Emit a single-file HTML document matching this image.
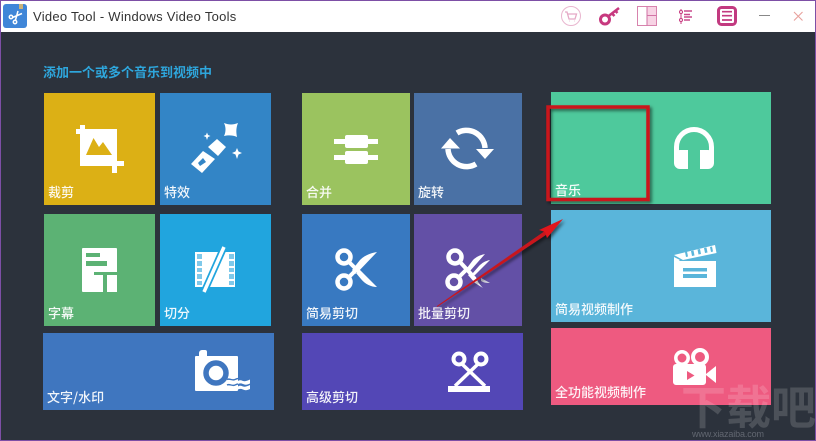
<!DOCTYPE html>
<html><head><meta charset="utf-8">
<style>
html,body{margin:0;padding:0;background:#2c323c}
#w{position:relative;width:816px;height:441px;overflow:hidden;background:#2c323c;font-family:"Liberation Sans","Noto Sans CJK SC",sans-serif}
.t{position:absolute}
.l{position:absolute;color:#fff;font:500 13px/18px "Noto Sans CJK SC",sans-serif;white-space:nowrap;opacity:.93}
svg{position:absolute;left:0;top:0}
</style></head><body><div id="w">
<div class="t" style="left:0;top:0;width:816px;height:32px;background:#fff"></div>
<div class="t" style="left:33px;top:7px;font:13px/19px 'Liberation Sans',sans-serif;color:#333;letter-spacing:.27px;white-space:nowrap">Video Tool - Windows Video Tools</div>
<div class="t" style="left:43px;top:63px;font:700 13px/18px 'Noto Sans CJK SC',sans-serif;color:#2ea6dc;white-space:nowrap">添加一个或多个音乐到视频中</div>

<div class="t" style="left:44px;top:93px;width:111px;height:112px;background:#dcb015"></div>
<div class="t" style="left:160px;top:93px;width:111px;height:112px;background:#3385c6"></div>
<div class="t" style="left:44px;top:214px;width:111px;height:112px;background:#5cb274"></div>
<div class="t" style="left:160px;top:214px;width:111px;height:112px;background:#21a5de"></div>
<div class="t" style="left:43px;top:333px;width:231px;height:77px;background:#3f76bf"></div>
<div class="t" style="left:302px;top:93px;width:108px;height:112px;background:#9bc35f"></div>
<div class="t" style="left:414px;top:93px;width:108px;height:112px;background:#4a71a5"></div>
<div class="t" style="left:302px;top:214px;width:108px;height:112px;background:#3879c1"></div>
<div class="t" style="left:414px;top:214px;width:108px;height:112px;background:#6350a6"></div>
<div class="t" style="left:302px;top:333px;width:221px;height:77px;background:#5347b6"></div>
<div class="t" style="left:551px;top:92px;width:220px;height:112px;background:#4ec99c"></div>
<div class="t" style="left:551px;top:210px;width:220px;height:112px;background:#5ab5da"></div>
<div class="t" style="left:551px;top:328px;width:220px;height:77px;background:#ee5a80"></div>

<div class="l" style="left:48px;top:183px">裁剪</div>
<div class="l" style="left:164px;top:183px">特效</div>
<div class="l" style="left:48px;top:304px">字幕</div>
<div class="l" style="left:164px;top:304px">切分</div>
<div class="l" style="left:47px;top:388px">文字/水印</div>
<div class="l" style="left:306px;top:183px">合并</div>
<div class="l" style="left:418px;top:183px">旋转</div>
<div class="l" style="left:306px;top:304px">简易剪切</div>
<div class="l" style="left:418px;top:304px">批量剪切</div>
<div class="l" style="left:306px;top:388px">高级剪切</div>
<div class="l" style="left:555px;top:181px">音乐</div>
<div class="l" style="left:555px;top:300px">简易视频制作</div>
<div class="l" style="left:555px;top:383px">全功能视频制作</div>

<svg width="816" height="441" viewBox="0 0 816 441">
<defs><filter id="s" x="-20%" y="-20%" width="140%" height="140%"><feDropShadow dx="2" dy="2" stdDeviation="1.6" flood-color="#000" flood-opacity=".55"/></filter></defs>

<!-- app icon -->
<rect x="3" y="4" width="24" height="24" rx="3" fill="#3f86d8"/>
<rect x="19" y="4" width="4" height="5" fill="#c9b27a"/>
<g stroke="#fff" stroke-width="1.500" fill="none"><circle cx="11" cy="17" r="1.700"/><circle cx="15" cy="22" r="1.700"/><path d="M12.500 17.500L22 13.500M15.500 20L18 11"/></g>

<!-- toolbar icons -->
<circle cx="571" cy="16" r="9.500" fill="none" stroke="#e9b6cf"/>
<path d="M565 12h2l2 7h6l1.500-5h-9M569 21h.5M574 21h.5" fill="none" stroke="#e5a9c6" stroke-width="1.300"/>
<circle cx="605" cy="19.500" r="4.500" fill="none" stroke="#c7397f" stroke-width="3"/>
<path d="M608 16.500L619 8M612 13.500l2.500 2.500M615.500 11l2 2" fill="none" stroke="#c7397f" stroke-width="2.600"/>
<rect x="637.500" y="6.500" width="19" height="19" fill="#fff" stroke="#d783ad"/>
<rect x="647" y="7" width="9" height="18" fill="#f7d3e4"/>
<path d="M647 6.500V25.500M647 15.500H656.500" stroke="#d272a5" fill="none"/>
<path d="M681 9V24" stroke="#c7397f" stroke-width="1"/>
<circle cx="681" cy="12" r="1.500" fill="#fff" stroke="#c7397f"/><circle cx="681" cy="20" r="1.500" fill="#fff" stroke="#c7397f"/>
<path d="M684 11h8M684 14.500h6M684 17h8M684 20h6" stroke="#c9488c" stroke-width="1.500"/>
<rect x="718.500" y="7.500" width="17" height="17" rx="3" fill="#fff" stroke="#c23a80" stroke-width="3"/>
<path d="M722 11.700h10M722 15.700h10M722 20h10" stroke="#c23a80" stroke-width="1.700"/>
<path d="M759 15.500h11" stroke="#888" stroke-width="1"/>
<path d="M794 12l8.500 8.500M802.500 12L794 20.500" stroke="#e8a09c" stroke-width="1.100"/>

<!-- crop -->
<g fill="#fff"><rect x="80" y="129" width="37" height="37"/><rect x="76" y="129" width="9" height="5"/><rect x="80" y="125" width="5" height="9"/><rect x="112" y="161" width="12" height="5"/><rect x="112" y="161" width="5" height="12"/></g>
<path d="M86 155L93.500 138 99 147 103 142 112 155z" fill="#dcb015"/>

<!-- wand -->
<g fill="#fff">
<path d="M208 147l9-8 9 8-8 9z"/>
<path d="M191 164l12-13 12 8-13 14z"/>
<path d="M224 123c5 2 9 2 14 0-2 5-2 9-1 14-4-2-9-2-13-1 2-4 2-9 0-13z"/>
<path d="M207 132.500l1 2.500 2.500 1-2.500 1-1 3-1-3-2.500-1 2.500-1z"/>
<path d="M237 148l1.500 3.500 3.500 1.500-3.500 1.500-1.500 4.500-1.500-4.500-3.500-1.500 3.500-1.500z"/>
</g>
<path d="M198 163l5-5 3 4-6 4z" fill="#3385c6"/>

<!-- subtitles -->
<path d="M82 249a1 1 0 0 1 1-1h33a1 1 0 0 1 1 1v43H83a1 1 0 0 1-1-1z" fill="#fff"/>
<path d="M86 253h14v4H86zM86 261h21v5H86zM94 272h23v3h-10v17h-4v-17h-9z" fill="#5cb274"/>

<!-- film -->
<rect x="195" y="252" width="40" height="35" fill="#fff"/>
<g fill="#7fc9ea"><rect x="197" y="254" width="5" height="5"/><rect x="197" y="261" width="5" height="5"/><rect x="197" y="268" width="5" height="4"/><rect x="197" y="274" width="5" height="5"/><rect x="197" y="281" width="5" height="4"/><rect x="229" y="254" width="5" height="5"/><rect x="229" y="261" width="5" height="5"/><rect x="229" y="268" width="5" height="4"/><rect x="229" y="274" width="5" height="5"/><rect x="229" y="281" width="5" height="4"/></g>
<path d="M224 247L204 292" stroke="#21a5de" stroke-width="7"/>
<path d="M224 247L204 292" stroke="#fff" stroke-width="3.500"/>

<!-- camera watermark -->
<path d="M195 357a1 1 0 0 1 1-1h3v-3a3 3 0 0 1 3-3h3a2 2 0 0 1 2 2v4h30a1 1 0 0 1 1 1v33a1 1 0 0 1-1 1h-41a1 1 0 0 1-1-1z" fill="#fff"/>
<circle cx="216" cy="373" r="10" fill="#fff" stroke="#3f76bf" stroke-width="5.500"/>
<path d="M227 379.500c3-1.500 5 1.500 8 0s5-1.500 8 0 4 0 7-1.500M227 385c3-1.500 5 1.500 8 0s5-1.500 8 0 4 0 7-1.500" fill="none" stroke="#3f76bf" stroke-width="1.400"/>
<path d="M238 381c2-1.200 3.500-.6 5 0s4 0 7-1.500v4c-3 1.500-5 1.500-7 .5s-3.500-.8-5 0zM238 386.500c2-1.200 3.500-.6 5 0s4 0 7-1.500v4c-3 1.500-5 1.500-7 .5s-3.500-.8-5 0z" fill="#fff"/>

<!-- merge -->
<g fill="#fff"><rect x="334" y="139" width="44" height="5"/><rect x="334" y="155" width="44" height="5"/><rect x="345" y="135" width="23" height="13" rx="2"/><rect x="345" y="151" width="23" height="13" rx="2"/></g>

<!-- rotate -->
<g fill="none" stroke="#fff" stroke-width="5.500"><path d="M457 133A18.500 18.500 0 0 1 485 148"/><path d="M476 164A18.500 18.500 0 0 1 448 149"/></g>
<path d="M441 148.500L450 138l10 10.500zM476 149h18l-9 10z" fill="#fff"/>

<!-- scissors -->
<g fill="none" stroke="#fff" stroke-width="4.500"><circle cx="344" cy="257" r="6.500"/><circle cx="344" cy="282" r="6.500"/></g>
<path d="M349 262l13 13M349 277l9-9" stroke="#fff" stroke-width="4"/>
<path d="M377 252c-6 1-12 3-17 8l-8 10 4 4zM377 287c-6 0-12-3-16-8l-5-6 4-3z" fill="#fff"/>

<!-- batch scissors -->
<g fill="none" stroke="#fff" stroke-width="4.500"><circle cx="455" cy="257" r="6.500"/><circle cx="454" cy="282" r="6.500"/></g>
<path d="M460 262l12 13M459 277l9-9" stroke="#fff" stroke-width="4"/>
<path d="M485 254c-5 1-9 3-12 6l-6 8 3 3zM490 260c-5 1-8 3-11 6l-7 8 2 2zM468 275l7 8 8 5c-3-3-6-7-7-11l-5-4z" fill="#fff"/>
<path d="M481 278l9 5c-3 0-6 0-9-2z" fill="#d0d0dc"/>

<!-- advanced scissors -->
<g fill="none" stroke="#fff" stroke-width="4"><circle cx="459" cy="359" r="5.500"/><circle cx="481" cy="359" r="5.500"/></g>
<path d="M462 364L485 386M478 364L455 386" stroke="#fff" stroke-width="3.500"/>
<rect x="448" y="386" width="42" height="6" fill="#fff"/>

<!-- headphones -->
<path d="M676.500 158V147A17.500 17.500 0 0 1 711.500 147V158" fill="none" stroke="#fff" stroke-width="5"/>
<path d="M688 150v19h-8a6 6 0 0 1-6-6v-7a6 6 0 0 1 6-6zM700 150v19h8a6 6 0 0 0 6-6v-7a6 6 0 0 0-6-6z" fill="#fff"/>

<!-- clapperboard -->
<rect x="674" y="261" width="42" height="26" fill="#fff"/>
<path d="M674 255L715 245 716.500 253 683 260z" fill="#fff"/>
<path d="M674 257v8l6-5z" fill="#fff"/>
<g fill="#5ab5da"><path d="M685 252l2-.5 1 5-2 .5zM691 251l2.500-.5 1 5-2.500.5zM697.500 249.500l2.500-.5 1 5-2.500.5zM704 248l2.500-.5 1 5-2.500.5zM710 247l2-.5 1 5-2 .5z"/><rect x="683" y="268" width="24" height="3.500"/><rect x="683" y="274" width="24" height="4"/></g>

<!-- movie camera -->
<path d="M673 367a3 3 0 0 1 3-3h27a3 3 0 0 1 3 3v7l10-8v17l-10-8v7a3 3 0 0 1-3 3h-27a3 3 0 0 1-3-3z" fill="#fff"/>
<circle cx="682" cy="358" r="6.200" fill="#ee5a80" stroke="#fff" stroke-width="3.500"/>
<circle cx="700" cy="357" r="7" fill="#ee5a80" stroke="#fff" stroke-width="4"/>
<path d="M687 371l7.500 4.500-7.500 4.500z" fill="#ee5a80"/>

<!-- watermark -->
<text x="681" y="424" font-size="46" font-weight="700" fill="#fff" opacity=".15" font-family="'Noto Sans CJK SC',sans-serif" textLength="135" lengthAdjust="spacingAndGlyphs">下载吧</text>
<text x="692" y="437" font-size="9" fill="#626771" font-family="'Liberation Sans',sans-serif" textLength="72">www.xiazaiba.com</text>

<!-- annotations -->
<rect x="548" y="107" width="100" height="92.500" fill="none" stroke="#c9161a" stroke-width="3.500" filter="url(#s)"/>
<g filter="url(#s)">
<path d="M437 306.500L545 231.500 546.500 234z" fill="#c8151f" stroke="#c8151f" stroke-width="1"/>
<path d="M563 219L539 230 545 232 547 238z" fill="#e0121a"/>
</g>

<!-- window border -->
<rect x=".5" y=".5" width="815" height="440" fill="none" stroke="#7d4fa6" stroke-width="1"/>
</svg>
</div></body></html>
